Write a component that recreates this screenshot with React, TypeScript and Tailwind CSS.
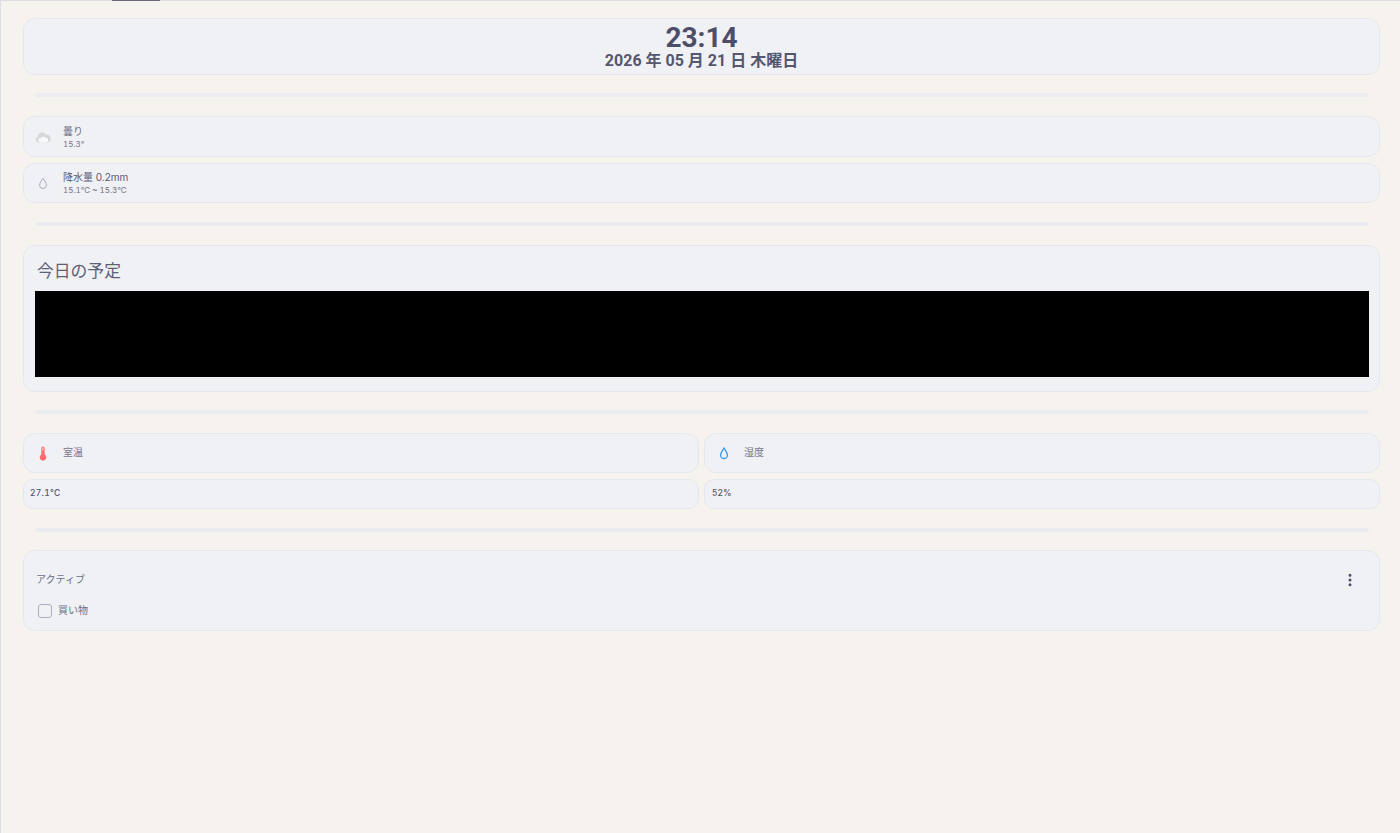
import { EllipsisVertical } from 'lucide-react';

const small = "font-['Inter','Noto_Sans_CJK_JP',sans-serif]";

function Divider() {
  return <div className="ml-[12px] mr-[11px] h-[4px] rounded-[2px] bg-[#ebecf0]" />;
}

function Cloud() {
  return (
    <svg viewBox="0 0 16 14" className="h-[14px] w-[16px]">
      <path d="M3.500 12.500a2.800 2.800 0 0 1-.6-5.500A4.400 4.400 0 0 1 7.500 2.500c1.400 0 2.600.8 3.200 2.200a3.900 3.900 0 0 1 1.700 7.800H3.500z" fill="#d6d6d8" />
      <path d="M6 12.800a2.500 2.500 0 0 1-.2-5c.5-1.400 3.800-1.600 4.700 0a2.500 2.500 0 0 1 .5 5H6z" fill="#f8f8f9" />
    </svg>
  );
}

function Drop({ color, width = 1.4 }: { color: string; width?: number }) {
  return (
    <svg viewBox="0 0 12 16" className="h-[13px] w-[10px]" fill="none">
      <path d="M6 1.500C4.300 4.300 1.800 6.900 1.800 10a4.200 4.200 0 0 0 8.400 0C10.200 6.900 7.700 4.300 6 1.500z" stroke={color} strokeWidth={width} />
    </svg>
  );
}

function Thermo() {
  return (
    <svg viewBox="0 0 10 16" className="h-[15px] w-[10px]">
      <path d="M3.200 2.200a1.800 1.800 0 0 1 3.600 0v6.900a3.500 3.500 0 1 1-3.600 0V2.200z" fill="#ff6b70" />
      <rect x="4.500" y="1.500" width="1" height="3.500" fill="#ffd9da" />
    </svg>
  );
}

function InfoRow({ icon, children, className }: { icon: React.ReactNode; children: React.ReactNode; className?: string }) {
  return (
    <div className={`flex items-center rounded-[12px] border border-[#e6e7ed] bg-[#f0f1f5] ${className ?? ''}`}>
      <div className="mr-[1px] flex w-[38px] shrink-0 justify-center">{icon}</div>
      <div className="min-w-0">{children}</div>
    </div>
  );
}

export default function App() {
  return (
    <div className={`min-h-[833px] border-l border-[#dcdde6] bg-[#f6f2ed] ${small}`}>
      {/* tab strip */}
      <div className="h-px bg-[#dcdde6]">
        <div className="ml-[111px] h-px w-[48px] bg-[#6b6880]" />
      </div>

      <div className="flex flex-col pl-[22px] pr-[20px] pt-[17px]">
        <div className="flex h-[57px] flex-col items-center rounded-[12px] border border-[#e6e7ed] bg-[#f0f1f5] pt-[5px] font-['Roboto','Noto_Sans_CJK_JP',sans-serif] text-[#4c4d69]">
          <div className="text-[28px] font-bold leading-[28px]">23:14</div>
          <div className="text-[16px] font-bold leading-[18px] text-[#55566f]">2026 年 05 月 21 日 木曜日</div>
        </div>

        <div className="mt-[18px] mb-[19px]"><Divider /></div>

        <InfoRow icon={<Cloud />} className="h-[41px]">
          <div className="pt-[1px] text-[10px] leading-[13px] text-[#6f6f85]">曇り</div>
          <div className="mt-[1px] text-[8px] leading-[11px] tabular-nums text-[#74758a]">15.3°</div>
        </InfoRow>
        <InfoRow icon={<Drop color="#a9a9bb" width={1.2} />} className="mt-[6px] h-[40px]">
          <div className="pt-[1px] text-[10px] leading-[13px] text-[#5a5b74]">降水量 0.2mm</div>
          <div className="mt-[1px] text-[8px] leading-[11px] tabular-nums text-[#6f7086]">15.1°C ~ 15.3°C</div>
        </InfoRow>

        <div className="mt-[19px] mb-[19px]"><Divider /></div>

        <div className="h-[147px] rounded-[12px] border border-[#e6e7ed] bg-[#f0f1f5] pl-[11px] pr-[10px]">
          <div className="h-[45px] pl-[2px] pt-[14px] text-[16.800px] leading-[22px] text-[#5e5f78]">今日の予定</div>
          <div className="h-[86px] bg-black" />
        </div>

        <div className="mt-[18px] mb-[19px]"><Divider /></div>

        <div className="grid grid-cols-2 gap-x-[5px] gap-y-[6px]">
          <InfoRow icon={<Thermo />} className="h-[40px]">
            <div className="pb-[1px] text-[10px] text-[#75768b]">室温</div>
          </InfoRow>
          <InfoRow icon={<Drop color="#3d9df5" width={1.7} />} className="h-[40px]">
            <div className="pb-[1px] text-[10px] text-[#75768b]">湿度</div>
          </InfoRow>
          <div className="flex h-[30px] items-center rounded-[10px] border border-[#e6e7ed] bg-[#f0f1f5] pb-[1px] pl-[6px] text-[8.500px] font-medium tabular-nums tracking-[0.3px] text-[#54556e]">27.1°C</div>
          <div className="flex h-[30px] items-center rounded-[10px] border border-[#e6e7ed] bg-[#f0f1f5] pb-[1px] pl-[7px] text-[8.500px] font-medium tabular-nums text-[#54556e]">52%</div>
        </div>

        <div className="mt-[19px] mb-[18px]"><Divider /></div>

        <div className="h-[81px] rounded-[12px] border border-[#e6e7ed] bg-[#f0f1f5] pl-[12px] pr-[21px]">
          <div className="flex h-[52px] items-center justify-between pt-[5px]">
            <span className="text-[10px] text-[#6c6d84]">アクティブ</span>
            <EllipsisVertical className="h-[16px] w-[16px] text-[#4c4d69]" strokeWidth={2.5} />
          </div>
          <div className="flex items-center pl-[2px]">
            <span className="h-[14px] w-[14px] rounded-[3px] border-[1.5px] border-[#aeaebf]" />
            <span className="ml-[6px] text-[10px] text-[#6c6d84]">買い物</span>
          </div>
        </div>
      </div>
    </div>
  );
}
